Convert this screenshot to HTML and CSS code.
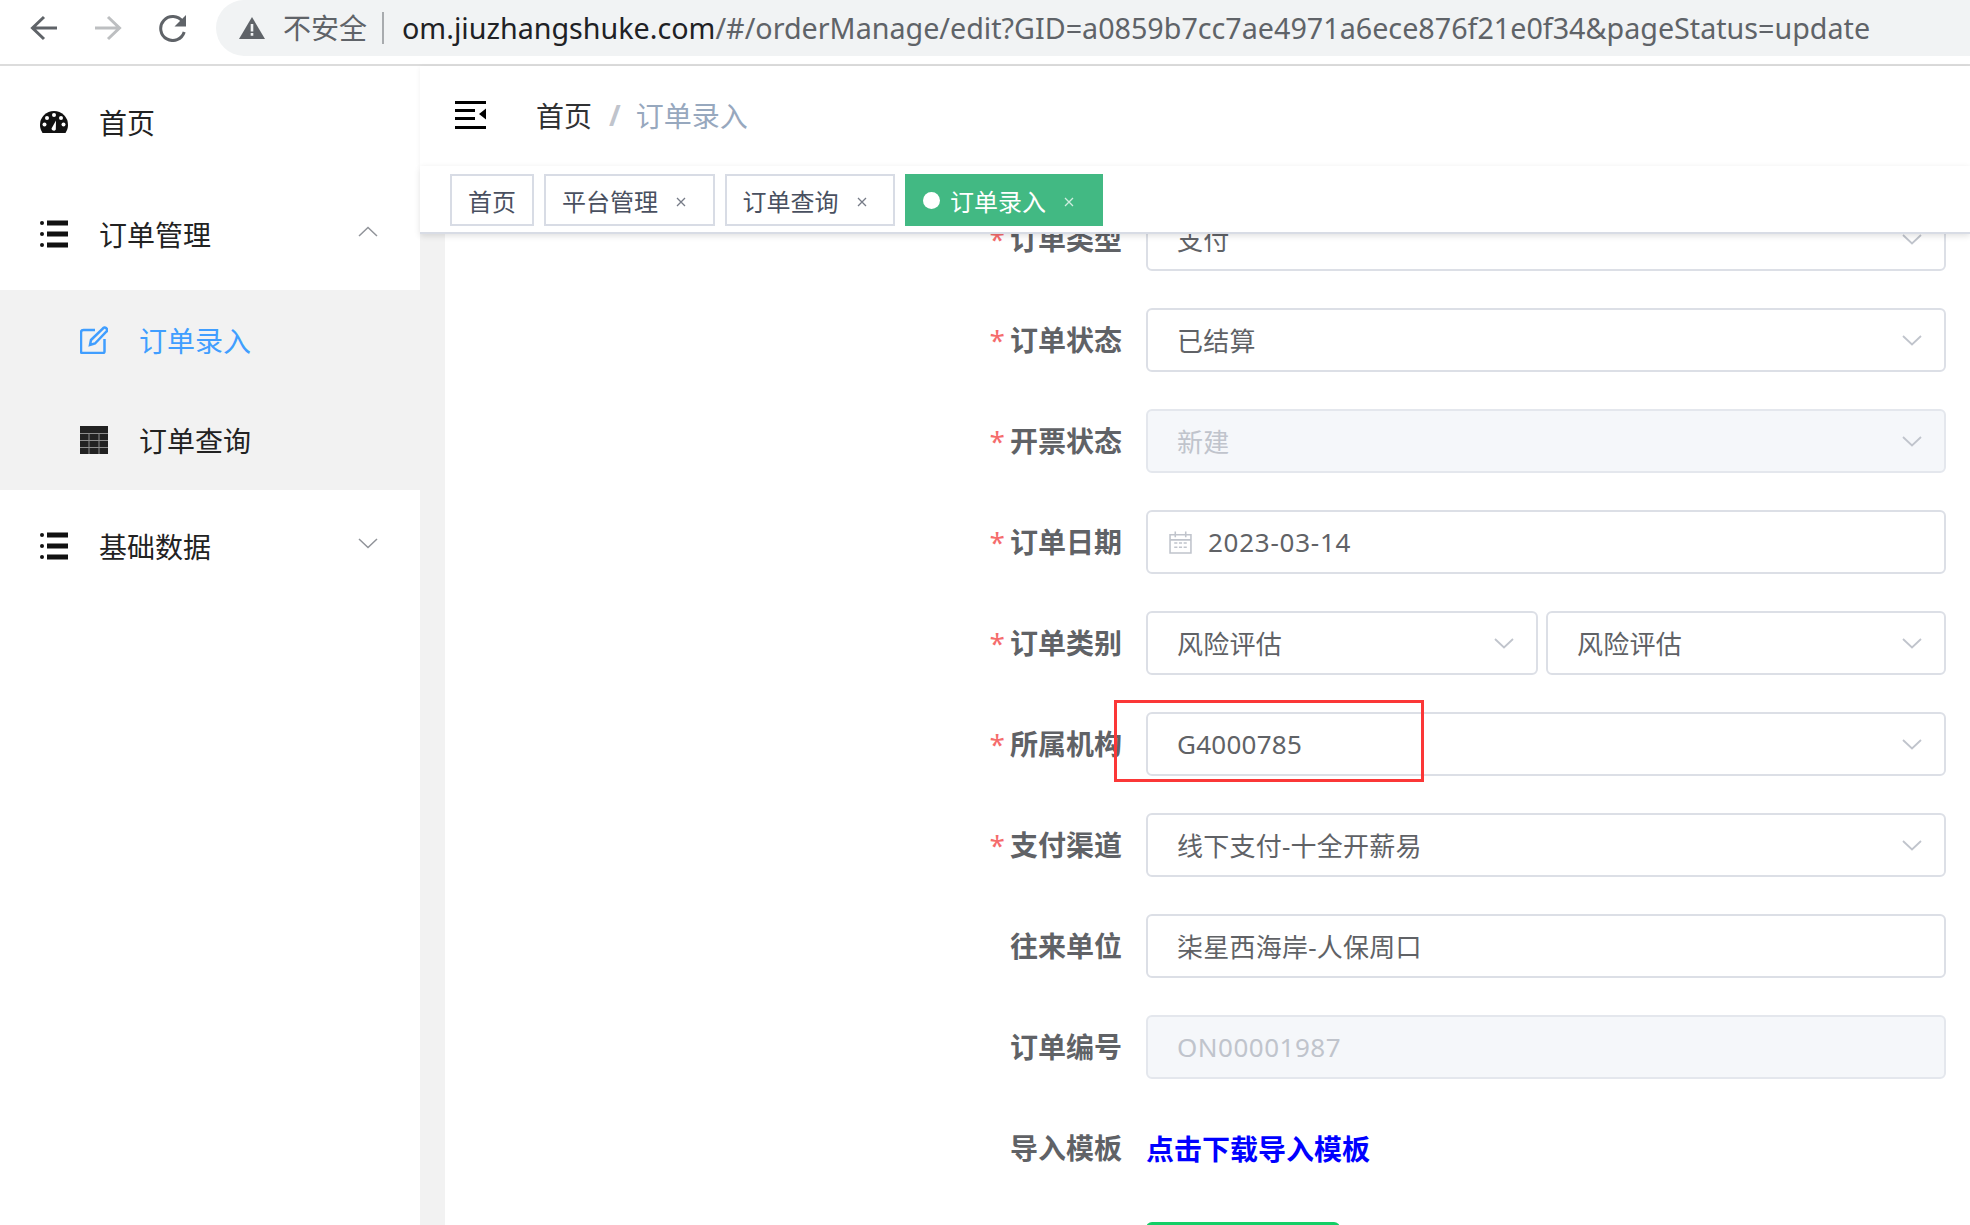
FILE: index.html
```html
<!DOCTYPE html>
<html lang="zh-CN">
<head>
<meta charset="utf-8">
<title>订单录入</title>
<link rel="stylesheet" href="styles.css">
</head>
<body>
<header class="chrome">
  <svg class="chrome-icon nav-back" viewBox="0 0 30 28"><path d="M28 14H4M15 3 3.500 14 15 25" /></svg>
  <svg class="chrome-icon nav-forward" viewBox="0 0 30 28"><path d="M2 14H26M15 3 26.500 14 15 25" /></svg>
  <svg class="chrome-icon nav-reload" viewBox="0 0 30 28"><path class="reload-arc" d="M24.500 7.500A12 12 0 1 0 26.200 18"/><path class="reload-head" d="M28 1V12.500H16.500Z"/></svg>
  <div class="omnibox">
    <svg class="warn" viewBox="0 0 26 22"><path d="M13 0 26 22H0Z"/><path class="warn-mark" d="M11.700 7h2.600v7.500h-2.600zM11.700 16h2.600v2.800h-2.600z"/></svg>
    <span class="insecure">不安全</span>
    <span class="url"><span class="host">om.jiuzhangshuke.com</span>/#/orderManage/edit?GID=a0859b7cc7ae4971a6ece876f21e0f34&amp;pageStatus=update</span>
  </div>
</header>

<div class="app">
  <aside class="sidebar">
    <a class="menu-item menu-home">
      <svg class="menu-icon" viewBox="0 0 28 24"><path d="M0 15A14 14 0 0 1 28 15C28 18 27 20.500 25.500 23H2.500C1 20.500 0 18 0 15Z"/><g fill="#fff"><circle cx="14" cy="5" r="2"/><circle cx="7" cy="8" r="2"/><circle cx="21" cy="8" r="2"/><circle cx="4.500" cy="14.500" r="2"/><circle cx="23.500" cy="14.500" r="2"/><path d="M11.500 18.500 16 10.500 15.800 19.500A2.300 2.300 0 0 1 11.500 18.500Z"/></g></svg>
      <span>首页</span>
    </a>
    <a class="menu-item">
      <svg class="menu-icon" viewBox="0 0 28 28"><circle cx="2" cy="3" r="2"/><circle cx="2" cy="14" r="2"/><circle cx="2" cy="25" r="2"/><rect x="7" y="0.500" width="21" height="5"/><rect x="7" y="11.500" width="21" height="5"/><rect x="7" y="22.500" width="21" height="5"/></svg>
      <span class="menu-label">订单管理</span>
      <svg class="menu-chevron" viewBox="0 0 20 11"><path d="M1 10 10 1.500 19 10"/></svg>
    </a>
    <div class="submenu">
      <a class="sub-item active">
        <svg class="menu-icon edit-icon" viewBox="0 0 28 28"><path d="M15 4H3.500A2.500 2.500 0 0 0 1 6.500V25.500A1.500 1.500 0 0 0 2.500 27H23A1.500 1.500 0 0 0 24.500 25.500V13"/><path d="M10 19 11 14 23 2.500A2 2 0 0 1 26 2L26.500 2.500A2 2 0 0 1 26.500 5.500L15 17.500Z"/></svg>
        <span>订单录入</span>
      </a>
      <a class="sub-item">
        <svg class="menu-icon table-icon" viewBox="0 0 28 28"><rect width="28" height="28" fill="#222"/><path d="M0 7.500H28M0 14.500H28M0 21.500H28M9 7.500V28M19 7.500V28" stroke="#8d8d8d" stroke-width="1" fill="none"/></svg>
        <span>订单查询</span>
      </a>
    </div>
    <a class="menu-item">
      <svg class="menu-icon" viewBox="0 0 28 28"><circle cx="2" cy="3" r="2"/><circle cx="2" cy="14" r="2"/><circle cx="2" cy="25" r="2"/><rect x="7" y="0.500" width="21" height="5"/><rect x="7" y="11.500" width="21" height="5"/><rect x="7" y="22.500" width="21" height="5"/></svg>
      <span class="menu-label">基础数据</span>
      <svg class="menu-chevron" viewBox="0 0 20 11"><path d="M1 1 10 9.500 19 1"/></svg>
    </a>
  </aside>

  <main class="main">
    <div class="navbar">
      <svg class="hamburger" viewBox="0 0 32 28"><path d="M0 0H31V3H0ZM0 8H20V11H0ZM0 16H20V19H0ZM0 25H31V28H0ZM24 13 31 7.500V18.500Z"/></svg>
      <nav class="breadcrumb"><span class="crumb">首页</span><span class="crumb-sep">/</span><span class="crumb-current">订单录入</span></nav>
    </div>
    <div class="tags">
      <a class="tag">首页</a>
      <a class="tag">平台管理<span class="tag-close"><svg viewBox="0 0 10 10"><path d="M1 1 9 9M9 1 1 9"/></svg></span></a>
      <a class="tag">订单查询<span class="tag-close"><svg viewBox="0 0 10 10"><path d="M1 1 9 9M9 1 1 9"/></svg></span></a>
      <a class="tag tag-active"><i class="tag-dot"></i>订单录入<span class="tag-close"><svg viewBox="0 0 10 10"><path d="M1 1 9 9M9 1 1 9"/></svg></span></a>
    </div>
    <div class="content">
      <div class="gutter"></div>
      <div class="pane">
        <form class="form">
          <div class="row">
            <label class="label req">订单类型</label>
            <div class="control select"><span>支付</span><svg class="chev" viewBox="0 0 20 11"><path d="M1 1 10 9.500 19 1"/></svg></div>
          </div>
          <div class="row">
            <label class="label req">订单状态</label>
            <div class="control select"><span>已结算</span><svg class="chev" viewBox="0 0 20 11"><path d="M1 1 10 9.500 19 1"/></svg></div>
          </div>
          <div class="row">
            <label class="label req">开票状态</label>
            <div class="control select disabled"><span>新建</span><svg class="chev" viewBox="0 0 20 11"><path d="M1 1 10 9.500 19 1"/></svg></div>
          </div>
          <div class="row">
            <label class="label req">订单日期</label>
            <div class="control date">
              <svg class="cal" viewBox="0 0 22 22"><path d="M1 3.500H21V21H1ZM1 8.500H21M6 0.500V6M16 0.500V6" fill="none"/><path d="M5 11.500H8M9.500 11.500H12.500M14 11.500H17M5 15.500H8M9.500 15.500H12.500M14 15.500H17" fill="none"/></svg>
              <span>2023-03-14</span>
            </div>
          </div>
          <div class="row">
            <label class="label req">订单类别</label>
            <div class="pair">
              <div class="control select"><span>风险评估</span><svg class="chev" viewBox="0 0 20 11"><path d="M1 1 10 9.500 19 1"/></svg></div>
              <div class="control select"><span>风险评估</span><svg class="chev" viewBox="0 0 20 11"><path d="M1 1 10 9.500 19 1"/></svg></div>
            </div>
          </div>
          <div class="row">
            <label class="label req">所属机构</label>
            <div class="control select"><span>G4000785</span><svg class="chev" viewBox="0 0 20 11"><path d="M1 1 10 9.500 19 1"/></svg></div>
          </div>
          <div class="row">
            <label class="label req">支付渠道</label>
            <div class="control select"><span>线下支付-十全开薪易</span><svg class="chev" viewBox="0 0 20 11"><path d="M1 1 10 9.500 19 1"/></svg></div>
          </div>
          <div class="row">
            <label class="label">往来单位</label>
            <div class="control"><span>柒星西海岸-人保周口</span></div>
          </div>
          <div class="row">
            <label class="label">订单编号</label>
            <div class="control disabled number"><span>ON00001987</span></div>
          </div>
          <div class="row">
            <label class="label">导入模板</label>
            <a class="download">点击下载导入模板</a>
          </div>
          <div class="row row-submit">
            <span class="label"></span>
            <button class="submit" type="button"></button>
          </div>
        </form>
      </div>
    </div>
  </main>
</div>
<div class="highlight"></div>
</body>
</html>
```
FILE: styles.css
```css
* { box-sizing: border-box; }
html, body { margin: 0; height: 1225px; overflow: hidden; background: #fff; }
body { font-family: "Noto Sans", "Noto Sans CJK SC", sans-serif; position: relative; }
a { text-decoration: none; color: inherit; }

/* browser bar */
.chrome { height: 66px; display: flex; align-items: flex-start; border-bottom: 2px solid #dcdcdc; background: #fff; }
.chrome-icon { width: 30px; height: 28px; margin-top: 14px; flex: none; }
.chrome-icon path { fill: none; stroke: #5f6368; stroke-width: 3; }
.nav-back { margin-left: 29px; }
.nav-forward { margin-left: 34px; }
.nav-forward path { stroke: #bdbfc1; }
.nav-reload { margin-left: 35px; }
.chrome-icon .reload-head { fill: #5f6368; stroke: none; }
.omnibox { margin-left: 28px; flex: 1; height: 56px; background: #f1f3f4; border-radius: 28px 0 0 28px; display: flex; align-items: center; padding-left: 23px; }
.warn { width: 26px; height: 22px; flex: none; fill: #5f6368; }
.warn-mark { fill: #f1f3f4; }
.insecure { margin-left: 18px; font-size: 28px; color: #5f6368; padding-right: 15px; border-right: 2px solid #a8abae; line-height: 32px; }
.url { margin-left: 18px; padding-bottom: 2px; font-size: 28.700px; color: #5f6368; white-space: nowrap; }
.host { color: #202124; }

/* app frame */
.app { display: flex; height: 1159px; }
.sidebar { width: 420px; flex: none; background: #fff; color: #222; font-size: 28px; }
.menu-item { display: flex; align-items: center; height: 112px; padding-left: 40px; }
.menu-icon { width: 28px; height: 28px; flex: none; margin-right: 31px; fill: #111; }
.menu-home .menu-icon { height: 24px; }
.menu-label { flex: 1; }
.menu-chevron { width: 20px; height: 11px; margin-right: 42px; margin-bottom: 6px; fill: none; stroke: #909399; stroke-width: 1.500; }
.submenu { background: #f2f2f2; }
.sub-item { display: flex; align-items: center; height: 100px; padding-left: 80px; }
.sub-item.active { color: #409eff; }
.edit-icon { fill: none; stroke: #409eff; stroke-width: 2.500; }

.main { flex: 1; min-width: 0; display: flex; flex-direction: column; }
.navbar { height: 100px; flex: none; display: flex; align-items: center; padding: 0 0 2px 35px; box-shadow: 0 1px 5px rgba(0, 21, 41, .06); position: relative; }
.hamburger { width: 32px; height: 28px; flex: none; fill: #000; }
.breadcrumb { margin-left: 49px; font-size: 28px; display: flex; align-items: center; }
.crumb { color: #303133; }
.crumb-sep { color: #c0c4cc; font-weight: 700; margin: 0 15px 0 17px; }
.crumb-current { color: #97a8be; }

.tags { height: 68px; flex: none; display: flex; gap: 10px; padding: 8px 0 0 30px; background: #fff; border-bottom: 2px solid #d8dce5; box-shadow: 0 2px 6px rgba(0, 0, 0, .12); position: relative; z-index: 2; }
.tag { height: 52px; display: flex; align-items: center; padding: 0 16px; border: 2px solid #d8dce5; font-size: 24px; color: #495060; }
.tag-close { width: 38.500px; flex: none; padding-left: 18px; display: flex; }
.tag-close svg { width: 10px; height: 10px; margin-top: 4px; fill: none; stroke: currentColor; stroke-width: 1.300; opacity: .75; }
.tag-active { background: #42b983; border-color: #42b983; color: #fff; }
.tag-dot { width: 17px; height: 17px; border-radius: 50%; background: #fff; margin-right: 10px; flex: none; }

.content { flex: 1; min-height: 0; display: flex; }
.gutter { width: 25px; flex: none; background: #f2f2f2; }
.pane { flex: 1; min-width: 0; overflow: hidden; background: #fff; }
.form { margin-top: -27px; padding-right: 24px; display: flex; flex-direction: column; gap: 37.050px; }
.row { display: flex; align-items: center; height: 64px; flex: none; }
.label { width: 701px; flex: none; text-align: right; padding: 0 24px 2px 0; font-size: 28px; font-weight: 700; color: #606266; }
.label.req::before { content: "*"; color: #f56c6c; font-weight: 400; margin-right: 5px; }
.control { flex: 1; min-width: 0; height: 64px; border: 2.500px solid #dcdfe6; border-radius: 6px; display: flex; align-items: center; padding-left: 29px; font-size: 26px; letter-spacing: .25px; color: #606266; background: #fff; }
.control > span { flex: 1; }
.control.disabled { background: #f5f7fa; border-color: #e4e7ed; color: #c0c4cc; }
.number { letter-spacing: .5px; }
.pair { flex: 1; min-width: 0; display: grid; grid-template-columns: 392px 1fr; gap: 8px; }
.chev { width: 20px; height: 11px; flex: none; margin-right: 22.500px; fill: none; stroke: #c0c4cc; stroke-width: 1.800; }
.date { padding-left: 21px; letter-spacing: .75px; }
.date > span { margin-left: 16px; }
.cal { width: 23px; height: 23px; flex: none; stroke: #c0c4cc; stroke-width: 1.500; }
.download { font-size: 28px; font-weight: 700; color: #00f; }
.row-submit { margin-top: 5px; align-items: flex-start; }
.submit { width: 194px; height: 63px; border: 0; border-radius: 6px; background: #13ce66; }

.highlight { position: absolute; left: 1114px; top: 700px; width: 310px; height: 82px; border: 3px solid #fb3737; pointer-events: none; }
```
